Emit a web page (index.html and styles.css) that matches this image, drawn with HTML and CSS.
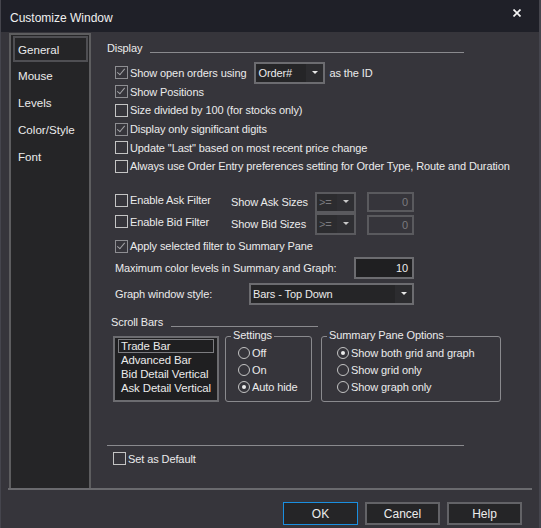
FILE: index.html
```html
<!DOCTYPE html>
<html lang="en">
<head>
    <meta charset="UTF-8">
    <title>Customize Window</title>
    <link rel="stylesheet" href="styles.css">
</head>
<body>
<div class="window">
    <div class="titlebar">
        <span class="title">Customize Window</span>
        <svg class="close" width="8" height="8" viewBox="0 0 8 8"><path d="M0.5 0.5L7.5 7.5M7.5 0.5L0.5 7.5" stroke="#f4f4f4" stroke-width="1.7"/></svg>
    </div>

    <div class="main">
        <ul class="nav">
            <li class="active">General</li>
            <li>Mouse</li>
            <li>Levels</li>
            <li>Color/Style</li>
            <li>Font</li>
        </ul>

        <div class="content">
            <div class="legend">
                <span>Display</span><i class="rule"></i>
            </div>

            <div class="checks">
                <div class="row">
                    <label class="check checked"><span class="box"></span>Show open orders using</label>
                    <div class="select order-select"><span class="value">Order#</span><span class="arrow"></span></div>
                    <span class="after">as the ID</span>
                </div>
                <div class="row"><label class="check checked"><span class="box"></span>Show Positions</label></div>
                <div class="row"><label class="check"><span class="box"></span>Size divided by 100 (for stocks only)</label></div>
                <div class="row"><label class="check checked"><span class="box"></span>Display only significant digits</label></div>
                <div class="row"><label class="check"><span class="box"></span>Update "Last" based on most recent price change</label></div>
                <div class="row"><label class="check"><span class="box"></span>Always use Order Entry preferences setting for Order Type, Route and Duration</label></div>
            </div>

            <div class="filters">
                <label class="check"><span class="box"></span>Enable Ask Filter</label>
                <span class="flabel">Show Ask Sizes</span>
                <div class="select small disabled"><span class="value">&gt;=</span><span class="arrow"></span></div>
                <div class="input disabled">0</div>

                <label class="check"><span class="box"></span>Enable Bid Filter</label>
                <span class="flabel">Show Bid Sizes</span>
                <div class="select small disabled"><span class="value">&gt;=</span><span class="arrow"></span></div>
                <div class="input disabled">0</div>
            </div>

            <div class="row apply"><label class="check checked"><span class="box"></span>Apply selected filter to Summary Pane</label></div>

            <div class="field levels">
                <span>Maximum color levels in Summary and Graph:</span>
                <div class="input">10</div>
            </div>

            <div class="field graph">
                <span>Graph window style:</span>
                <div class="select wide"><span class="value">Bars - Top Down</span><span class="arrow"></span></div>
            </div>

            <div class="legend scroll-legend">
                <span>Scroll Bars</span><i class="rule"></i>
            </div>

            <div class="groups">
                <ul class="listbox">
                    <li class="selected">Trade Bar</li>
                    <li>Advanced Bar</li>
                    <li>Bid Detail Vertical</li>
                    <li>Ask Detail Vertical</li>
                </ul>

                <div class="group settings">
                    <span class="group-title">Settings</span>
                    <label class="radio"><span class="dot"></span>Off</label>
                    <label class="radio"><span class="dot"></span>On</label>
                    <label class="radio on"><span class="dot"></span>Auto hide</label>
                </div>

                <div class="group summary">
                    <span class="group-title">Summary Pane Options</span>
                    <label class="radio on"><span class="dot"></span>Show both grid and graph</label>
                    <label class="radio"><span class="dot"></span>Show grid only</label>
                    <label class="radio"><span class="dot"></span>Show graph only</label>
                </div>
            </div>

            <div class="separator"></div>

            <div class="row default"><label class="check"><span class="box"></span>Set as Default</label></div>
        </div>
    </div>

    <div class="footer">
        <button class="primary">OK</button>
        <button>Cancel</button>
        <button>Help</button>
    </div>
</div>
</body>
</html>
```

FILE: styles.css
```css
body {
    margin: 0;
    background: #36353b;
    font-family: 'Liberation Sans', Arial, sans-serif;
    font-size: 11px;
    letter-spacing: -0.1px;
    color: #ebebeb;
    white-space: nowrap;
}
.window {
    width: 541px;
    height: 528px;
    background: #36353b;
    box-sizing: border-box;
    border-left: 1px solid #45454d;
    border-right: 2px solid #45454d;
}
.titlebar {
    height: 32px;
    background: #1f2028;
    display: flex;
    align-items: center;
    justify-content: space-between;
    padding: 4px 18px 0 9px;
    box-sizing: border-box;
}
.title {
    font-size: 12px;
    letter-spacing: 0;
    color: #f0f0f0;
}
.close {
    align-self: flex-start;
    margin-top: 5px;
}

/* main area */
.main {
    display: flex;
    height: 456px;
    padding: 1px 0 0 8px;
    box-sizing: border-box;
}
.nav {
    flex: none;
    list-style: none;
    margin: 0;
    padding: 0 1px 0 2px;
    width: 82px;
    box-sizing: border-box;
    background: #252527;
    border: 2px solid #5d5d5f;
    border-bottom: none;
    font-size: 11.6px;
    letter-spacing: 0;
}
.nav li {
    height: 27px;
    line-height: 25px;
    padding-left: 4px;
    box-sizing: border-box;
    border: 1px solid transparent;
}
.nav li.active {
    border: 2px solid #4f4f53;
    line-height: 23px;
    padding-left: 3px;
    margin-top: 1px;
    height: 26px;
}
.content {
    flex: 1;
    min-width: 0;
    padding-left: 16px;
}

/* section legends */
.legend {
    display: flex;
    align-items: center;
    height: 16px;
    width: 357px;
    margin-top: 7px;
}
.legend .rule {
    flex: 1;
    border-top: 1px solid #8a8a8e;
    margin: 8px 0 0 8px;
}
.scroll-legend {
    margin-top: 9px;
    width: 211px;
    padding-left: 4px;
    box-sizing: border-box;
}

/* checkbox rows */
.checks {
    margin-top: 7.6px;
}
.row {
    display: flex;
    align-items: center;
    height: 18.7px;
    padding-left: 8px;
}
.check {
    display: flex;
    align-items: center;
}
.box {
    width: 11px;
    height: 11px;
    border: 1px solid #c4c4c4;
    margin-right: 2px;
    flex: none;
    position: relative;
}
.check.checked .box {
    border-color: #8e8e92;
}
.check.checked .box::after {
    content: '';
    position: absolute;
    left: 3px;
    top: 0;
    width: 3px;
    height: 7px;
    border: solid #a2a2a6;
    border-width: 0 1.5px 1.5px 0;
    transform: rotate(40deg);
}

/* selects and inputs */
.select {
    display: flex;
    align-items: stretch;
    border: 2px solid #6c6c70;
    background: #252527;
    box-sizing: border-box;
}
.select .value {
    flex: 1;
    padding-left: 2px;
    display: flex;
    align-items: center;
}
.select .arrow {
    width: 17px;
    background: #2c2c2f;
    position: relative;
}
.select .arrow::after {
    content: '';
    position: absolute;
    left: 6px;
    top: 50%;
    margin-top: -2px;
    border-left: 3px solid transparent;
    border-right: 3px solid transparent;
    border-top: 3px solid #e8e8e8;
}
.order-select {
    width: 71px;
    height: 22px;
    margin-left: 8px;
}
.after {
    margin-left: 4px;
}
.input {
    border: 2px solid #6c6c70;
    background: #1f1f21;
    box-sizing: border-box;
    padding-right: 4px;
    display: flex;
    align-items: center;
    justify-content: flex-end;
}
.disabled {
    border-color: #5a5a5e;
    background: #36353b;
    color: #7a7a7e;
}
.select.disabled .value {
    background: #2c2c2f;
}
.select.disabled .arrow {
    background: #2f2f33;
}
.select.disabled .arrow::after {
    border-top-color: #c8c8c8;
}

/* filter grid */
.filters {
    display: grid;
    grid-template-columns: 116px 84px 41px 47px;
    grid-auto-rows: 21.5px;
    margin: 16px 0 0 8px;
    align-items: center;
}
.filters .check {
    align-self: start;
    padding-top: 2px;
}
.filters .select {
    height: 100%;
}
.filters .input {
    height: 20px;
    margin-left: 11px;
    width: 47px;
}
.filters .input:last-child {
    align-self: end;
}
.apply {
    margin-top: 2px;
}
.field {
    display: flex;
    align-items: center;
    justify-content: space-between;
    height: 22px;
    width: 299px;
    padding-left: 8px;
}
.levels {
    margin-top: 2px;
}
.levels .input {
    width: 60px;
    height: 22px;
}
.graph {
    margin-top: 4px;
}
.select.wide {
    width: 165px;
    height: 22px;
}

/* scroll bar group boxes */
.groups {
    display: flex;
    align-items: stretch;
    height: 66px;
    margin: 6px 0 0 6px;
}
.listbox {
    list-style: none;
    margin: 0;
    padding: 1px 3px;
    width: 106px;
    box-sizing: border-box;
    background: #1f1f21;
    border: 2px solid #6c6c70;
    font-size: 11.4px;
}
.listbox li {
    height: 14px;
    line-height: 12px;
    padding-left: 2px;
    border: 1px solid transparent;
    box-sizing: border-box;
}
.listbox li.selected {
    border-color: #7c7c80;
}
.group {
    position: relative;
    border: 1px solid #8a8a8e;
    border-radius: 3px;
    box-sizing: border-box;
    padding: 7px 0 0 12px;
}
.group-title {
    position: absolute;
    top: -8px;
    left: 5px;
    padding: 0 2px;
    background: #36353b;
}
.settings {
    width: 87px;
    margin-left: 6px;
}
.summary {
    width: 180px;
    margin-left: 9px;
    padding-left: 15px;
}
.radio {
    display: flex;
    align-items: center;
    height: 17px;
}
.dot {
    width: 10px;
    height: 10px;
    border: 1px solid #c4c4c4;
    border-radius: 50%;
    margin-right: 2px;
    position: relative;
}
.radio.on .dot::after {
    content: '';
    position: absolute;
    left: 3px;
    top: 3px;
    width: 4px;
    height: 4px;
    border-radius: 50%;
    background: #ececec;
}
.separator {
    width: 357px;
    border-top: 1px solid #8a8a8e;
    margin-top: 43px;
}
.default {
    margin-top: 3px;
    padding-left: 6px;
    height: 19px;
}

/* footer */
.footer {
    display: flex;
    justify-content: flex-end;
    gap: 7px;
    margin: 0 7px 0 7px;
    border-top: 2px solid #6a6a6e;
    padding: 12px 10px 0 0;
}
button {
    width: 75px;
    height: 23px;
    background: #252527;
    border: 2px solid #636367;
    color: #ececec;
    font-family: inherit;
    font-size: 12px;
    letter-spacing: 0;
    padding: 0;
}
button.primary {
    border: 1px solid #1a8fe0;
}
```
